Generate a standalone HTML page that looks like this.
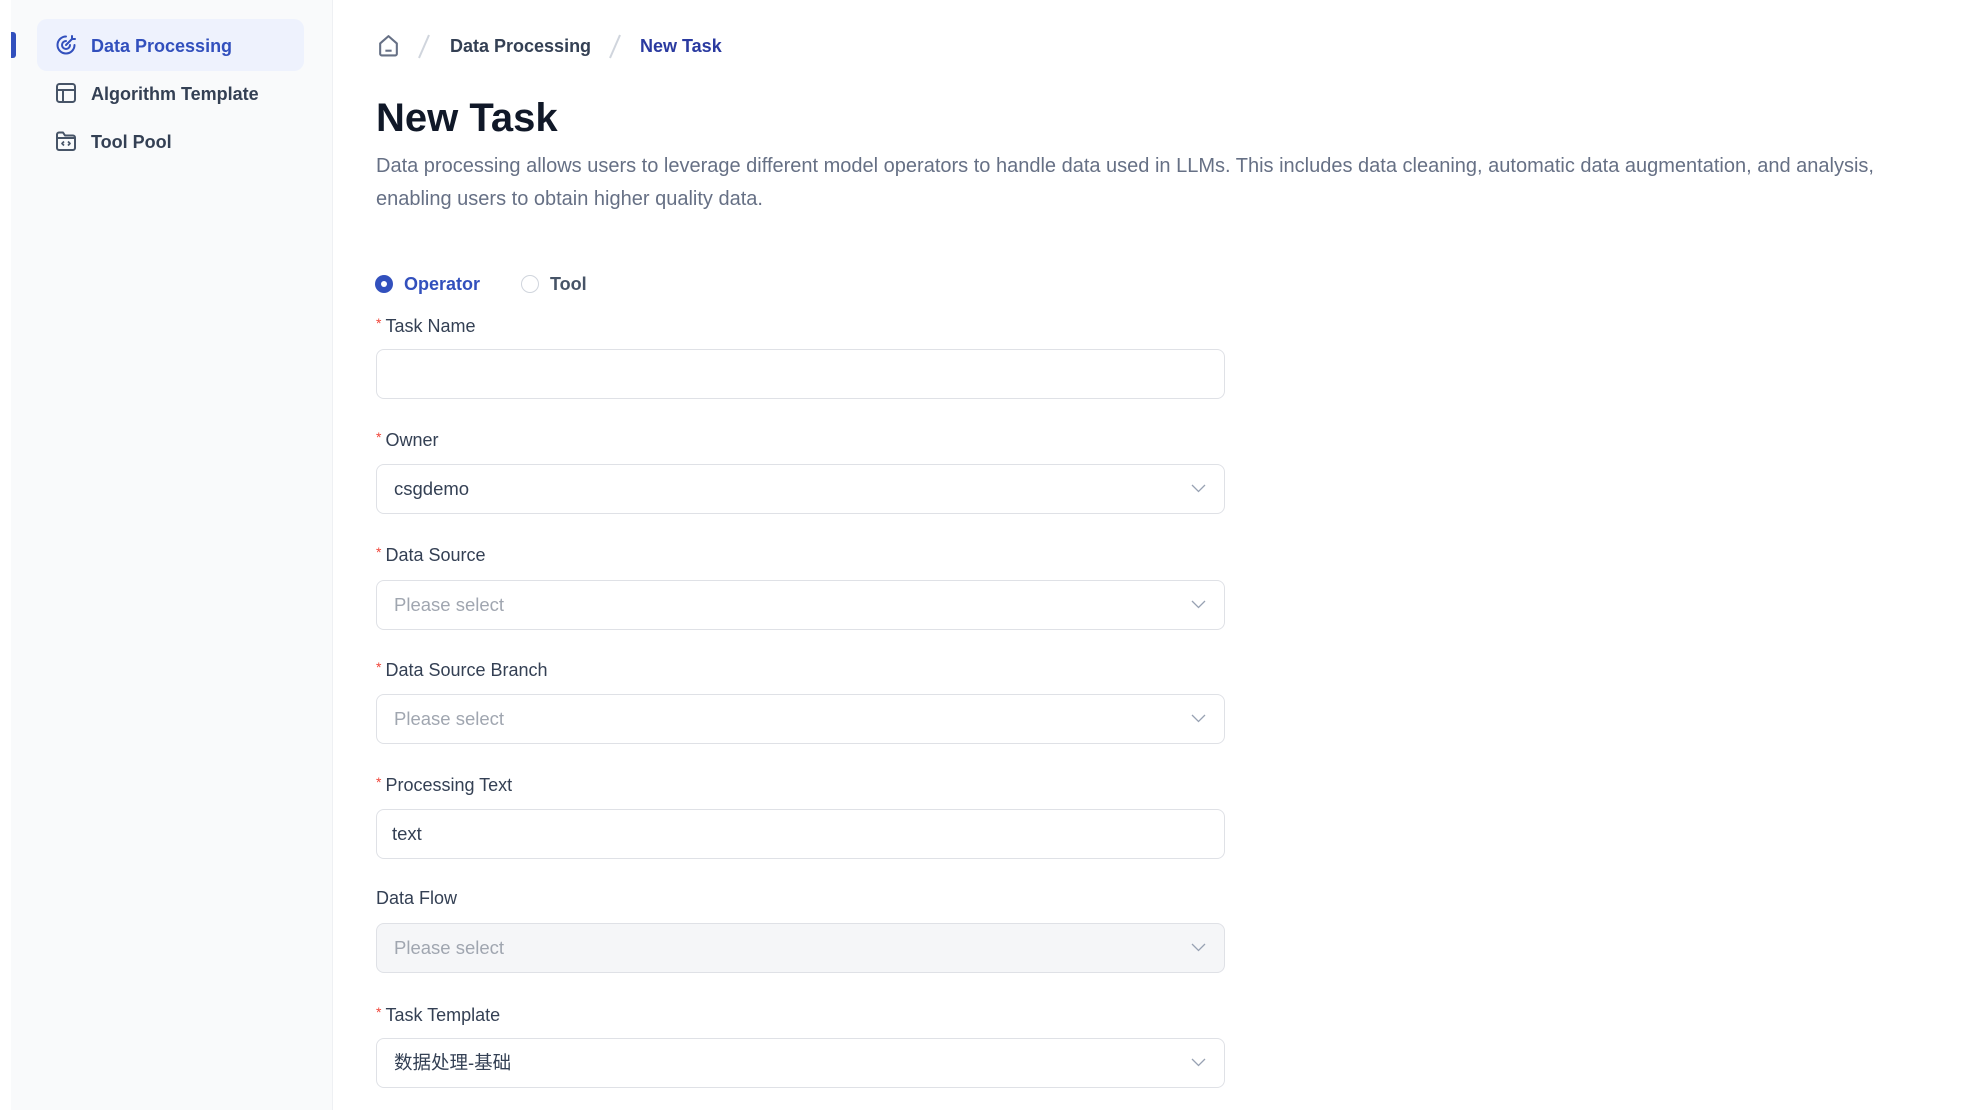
<!DOCTYPE html>
<html><head><meta charset="utf-8"><style>
*{box-sizing:border-box;margin:0;padding:0}
body{width:1970px;height:1110px;overflow:hidden;background:#fff;font-family:"Liberation Sans","Noto Sans CJK SC",sans-serif;color:#344054;position:relative}
.side{position:absolute;left:11px;top:0;width:322px;height:1110px;background:#f9fafb;border-right:1px solid #eef0f3}
.ind{position:absolute;left:11px;top:32px;width:5px;height:26px;background:#3250bd;border-radius:0 3px 3px 0}
.act{position:absolute;left:37px;top:19px;width:267px;height:52px;background:#eef2fd;border-radius:10px}
.nav{position:absolute;left:91px;font-size:18px;font-weight:bold;color:#344054;line-height:24px}
.ico{position:absolute;left:54px;width:24px;height:24px}
.bc{position:absolute;top:34px;font-size:18px;line-height:24px;font-weight:bold}
h1{position:absolute;left:376px;top:93px;font-size:40px;line-height:50px;color:#101828;font-weight:bold}
.desc{position:absolute;left:376px;top:150px;font-size:20px;line-height:33px;color:#667085;width:1560px;white-space:nowrap}
.lab{position:absolute;left:376px;font-size:18px;line-height:24px;color:#344054}
.lab b{color:#f04438;font-weight:normal;font-size:14px;vertical-align:4px;margin-right:4px}
.inp{position:absolute;left:376px;width:849px;height:50px;border:1.5px solid #dfe1e6;border-radius:8px;font-size:18.5px;line-height:47px;padding-left:17px;color:#344054}
.ph{color:#a0a6b0}
.dis{background:#f5f6f8}
.chev{position:absolute;right:18px;top:18px;width:15px;height:10px}
</style></head><body>
<div class="side"></div>
<div class="ind"></div>
<div class="act"></div>
<svg class="ico" style="top:33px" viewBox="0 0 24 24" fill="none" stroke="#3250bd" stroke-width="2" stroke-linecap="round"><path d="M20.5 12a8.5 8.5 0 1 1-8.5-8.5"/><path d="M16 12a4 4 0 1 1-4-4"/><path d="M12 12l6-6"/><path d="M18 3v3h3"/></svg>
<div class="nav" style="top:34px;color:#3250bd">Data Processing</div>
<svg class="ico" style="top:81px" viewBox="0 0 24 24" fill="none" stroke="#475467" stroke-width="2"><rect x="3" y="3" width="18" height="18" rx="2.5"/><path d="M3 9h18M9 9v12"/></svg>
<div class="nav" style="top:82px">Algorithm Template</div>
<svg class="ico" style="top:129px" viewBox="0 0 24 24" fill="none" stroke="#475467" stroke-width="2" stroke-linejoin="round"><path d="M3 5.5a2 2 0 0 1 2-2h4l2 3h8a2 2 0 0 1 2 2V19a2 2 0 0 1-2 2H5a2 2 0 0 1-2-2z"/><path d="M3 9h18"/><path d="M10 12.5l-2 2 2 2M14 12.5l2 2-2 2" stroke-width="1.7"/></svg>
<div class="nav" style="top:130px">Tool Pool</div>

<svg style="position:absolute;left:376px;top:33px" width="25" height="25" viewBox="0 0 24 24" fill="none" stroke="#667085" stroke-width="2" stroke-linejoin="round"><path d="M4 10L12 3l8 7v10a1.5 1.5 0 0 1-1.5 1.5h-13A1.5 1.5 0 0 1 4 20z"/><path d="M9 17h6"/></svg>
<svg style="position:absolute;left:416px;top:33px" width="16" height="27"><path d="M13 2L3 25" stroke="#d0d5dd" stroke-width="2"/></svg>
<div class="bc" style="left:450px;color:#344054">Data Processing</div>
<svg style="position:absolute;left:607px;top:33px" width="16" height="27"><path d="M13 2L3 25" stroke="#d0d5dd" stroke-width="2"/></svg>
<div class="bc" style="left:640px;color:#2a3aa0">New Task</div>

<h1>New Task</h1>
<div class="desc">Data processing allows users to leverage different model operators to handle data used in LLMs. This includes data cleaning, automatic data augmentation, and analysis,<br>enabling users to obtain higher quality data.</div>

<div style="position:absolute;left:375px;top:275px;width:18px;height:18px;border-radius:50%;background:#3250bd"><div style="position:absolute;left:6px;top:6px;width:6px;height:6px;border-radius:50%;background:#fff"></div></div>
<div class="lab" style="left:404px;top:272px;color:#3250bd;font-weight:bold">Operator</div>
<div style="position:absolute;left:521px;top:275px;width:18px;height:18px;border-radius:50%;border:1.5px solid #d0d5dd"></div>
<div class="lab" style="left:550px;top:272px;color:#475467;font-weight:bold">Tool</div>

<div class="lab" style="top:311px"><b>*</b>Task Name</div>
<div class="inp" style="top:349px"></div>
<div class="lab" style="top:425px"><b>*</b>Owner</div>
<div class="inp" style="top:464px">csgdemo<svg class="chev" viewBox="0 0 15 10" fill="none" stroke="#98a2b3" stroke-width="1.3"><path d="M1 2l6.5 6.5L14 2"/></svg></div>
<div class="lab" style="top:540px"><b>*</b>Data Source</div>
<div class="inp ph" style="top:580px">Please select<svg class="chev" viewBox="0 0 15 10" fill="none" stroke="#98a2b3" stroke-width="1.3"><path d="M1 2l6.5 6.5L14 2"/></svg></div>
<div class="lab" style="top:655px"><b>*</b>Data Source Branch</div>
<div class="inp ph" style="top:694px">Please select<svg class="chev" viewBox="0 0 15 10" fill="none" stroke="#98a2b3" stroke-width="1.3"><path d="M1 2l6.5 6.5L14 2"/></svg></div>
<div class="lab" style="top:770px"><b>*</b>Processing Text</div>
<div class="inp" style="top:809px;padding-left:15px">text</div>
<div class="lab" style="top:886px">Data Flow</div>
<div class="inp ph dis" style="top:923px">Please select<svg class="chev" viewBox="0 0 15 10" fill="none" stroke="#98a2b3" stroke-width="1.3"><path d="M1 2l6.5 6.5L14 2"/></svg></div>
<div class="lab" style="top:1000px"><b>*</b>Task Template</div>
<div class="inp" style="top:1038px">数据处理-基础<svg class="chev" viewBox="0 0 15 10" fill="none" stroke="#98a2b3" stroke-width="1.3"><path d="M1 2l6.5 6.5L14 2"/></svg></div>
</body></html>
